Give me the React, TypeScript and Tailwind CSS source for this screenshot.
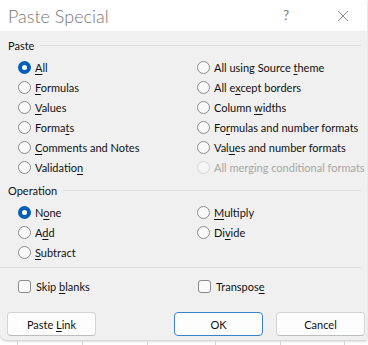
import React from 'react';

const font = { fontFamily: 'Lato, "Open Sans", sans-serif' };

// label with an accelerator key underlined at index u (u < 0: none)
const Label = ({ text, u, disabled = false }: { text: string; u: number; disabled?: boolean }) => (
  <span className={`whitespace-nowrap ${disabled ? 'text-[#a6a6a6]' : 'text-[#111]'}`}>
    {u < 0 ? (
      text
    ) : (
      <>
        {text.slice(0, u)}
        <span className="underline underline-offset-2">{text[u]}</span>
        {text.slice(u + 1)}
      </>
    )}
  </span>
);

const Radio = ({ text, u, checked = false, disabled = false }) => (
  <div className="h-[20px] flex items-center gap-[4px]">
    {checked ? (
      <span className="w-[13px] h-[13px] shrink-0 rounded-full bg-[#005fb8] flex items-center justify-center">
        <span className="w-[5px] h-[5px] rounded-full bg-white" />
      </span>
    ) : (
      <span
        className={`w-[13px] h-[13px] shrink-0 rounded-full border ${
          disabled ? 'border-[#d6d6d6] bg-[#f5f5f5]' : 'border-[#8a8a8a] bg-[#f9f9f9]'
        }`}
      />
    )}
    <Label text={text} u={u} disabled={disabled} />
  </div>
);

const Check = ({ text, u }) => (
  <div className="h-[20px] flex items-center gap-[5px]">
    <span className="w-[13px] h-[13px] shrink-0 rounded-[3px] border border-[#8a8a8a] bg-[#f9f9f9]" />
    <Label text={text} u={u} />
  </div>
);

const GroupLabel = ({ title, className = '' }) => (
  <div className={`h-[14px] flex items-center gap-[6px] pl-[8px] pr-[6px] ${className}`}>
    <span className="text-[#111]">{title}</span>
    <div className="flex-1 h-px bg-[#dedede]" />
  </div>
);

const Button = ({ text, u, primary = false, className = '' }) => (
  <button
    className={`h-[24px] w-[89px] rounded-[4px] bg-[#fdfdfd] border ${
      primary ? 'border-[#3b82c9]' : 'border-[#d4d4d4] border-b-[#bdbdbd]'
    } ${className}`}
  >
    <Label text={text} u={u} />
  </button>
);

export default function App() {
  return (
    <div className="w-[368px] h-[345px] bg-white overflow-hidden text-[11px] leading-none" style={font}>
      <div className="w-[367px] h-[340px] bg-[#f0f0f0] rounded-bl-[7px] shadow-[0_1px_3px_rgba(0,0,0,0.25)] flex flex-col">
        {/* title bar */}
        <div className="h-[31px] bg-white flex items-center pl-[8px] pr-[16px]">
          <span className="text-[18px] font-light text-[#767676] flex-1">Paste Special</span>
          <span className="text-[13px] text-[#777] mr-[48px]">?</span>
          <svg width="12" height="12" viewBox="0 0 12 12" className="mr-[2px]">
            <path d="M1 1L11 11M11 1L1 11" stroke="#8a8a8a" strokeWidth="1" fill="none" />
          </svg>
        </div>

        <GroupLabel title="Paste" className="mt-[7px]" />
        <div className="grid grid-cols-[179px_1fr] pl-[18px] mt-[5px]">
          <div className="flex flex-col">
            <Radio text="All" u={0} checked />
            <Radio text="Formulas" u={0} />
            <Radio text="Values" u={0} />
            <Radio text="Formats" u={5} />
            <Radio text="Comments and Notes" u={0} />
            <Radio text="Validation" u={9} />
          </div>
          <div className="flex flex-col">
            <Radio text="All using Source theme" u={17} />
            <Radio text="All except borders" u={5} />
            <Radio text="Column widths" u={7} />
            <Radio text="Formulas and number formats" u={2} />
            <Radio text="Values and number formats" u={3} />
            <Radio text="All merging conditional formats" u={-1} disabled />
          </div>
        </div>

        <GroupLabel title="Operation" className="mt-[6px]" />
        <div className="grid grid-cols-[179px_1fr] pl-[18px] mt-[5px]">
          <div className="flex flex-col">
            <Radio text="None" u={1} checked />
            <Radio text="Add" u={1} />
            <Radio text="Subtract" u={0} />
          </div>
          <div className="flex flex-col">
            <Radio text="Multiply" u={0} />
            <Radio text="Divide" u={2} />
          </div>
        </div>

        <div className="h-px bg-[#dedede] mt-[5px] mr-[6px]" />

        <div className="grid grid-cols-[180px_1fr] pl-[18px] mt-[8px]">
          <Check text="Skip blanks" u={5} />
          <Check text="Transpose" u={8} />
        </div>

        <div className="flex pl-[7px] mt-[16px]">
          <Button text="Paste Link" u={6} />
          <Button text="OK" u={-1} primary className="ml-[78px]" />
          <Button text="Cancel" u={-1} className="ml-[13px]" />
        </div>
      </div>

      {/* worksheet grid peeking below the dialog */}
      <div className="h-[5px] flex">
        <div className="w-[18px] border-r border-[#d4d4d4]" />
        <div className="w-[65px] border-r border-[#d4d4d4]" />
        <div className="w-[65px] border-r border-[#d4d4d4]" />
        <div className="w-[68px] border-r border-[#d4d4d4]" />
        <div className="w-[65px] border-r border-[#d4d4d4]" />
        <div className="w-[64px] border-r border-[#d4d4d4]" />
      </div>
    </div>
  );
}
